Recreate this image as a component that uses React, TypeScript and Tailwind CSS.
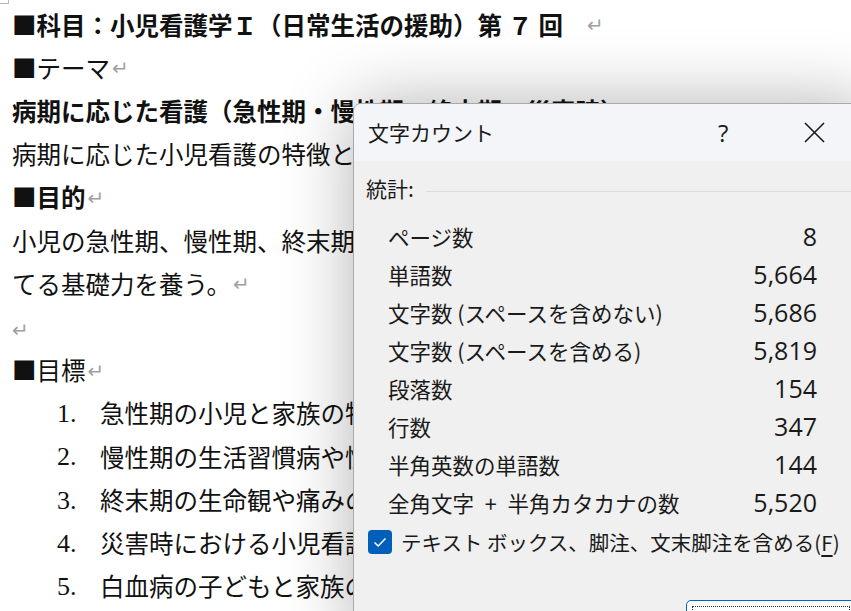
import React from "react";

const docFont = "font-['Noto_Sans_CJK_JP',serif]";
const serifNum = "font-['Liberation_Serif',serif]";
const uiFont = "font-['Noto_Sans_CJK_JP',sans-serif]";
const numFont = "font-['Open_Sans','Noto_Sans',sans-serif]";

function Ret() {
  return <span className="text-[#a0a0a0] text-[20px] font-normal ml-[2px] font-['DejaVu_Sans',sans-serif]">↵</span>;
}

const stats: { label: string; value: string }[] = [
  { label: "ページ数", value: "8" },
  { label: "単語数", value: "5,664" },
  { label: "文字数 (スペースを含めない)", value: "5,686" },
  { label: "文字数 (スペースを含める)", value: "5,819" },
  { label: "段落数", value: "154" },
  { label: "行数", value: "347" },
  { label: "半角英数の単語数", value: "144" },
  { label: "全角文字\u2002+\u2002半角カタカナの数", value: "5,520" },
];

const goals = [
  "急性期の小児と家族の特徴を理解し、必要な看護を説明できる。",
  "慢性期の生活習慣病や慢性疾患をもつ小児と家族の看護を説明できる。",
  "終末期の生命観や痛みの緩和、家族への援助について説明できる。",
  "災害時における小児看護の役割を説明できる。",
  "白血病の子どもと家族の看護について説明できる。",
];

function Line({ children, className = "" }: { children: React.ReactNode; className?: string }) {
  return <div className={`h-[43.2px] flex items-center whitespace-nowrap ${className}`}>{children}</div>;
}

function WordCountDialog() {
  return (
    <div className={`absolute left-[353px] top-[103px] w-[520px] h-[540px] rounded-tl-[8px] border border-[#a9a9a9] bg-[#f0f0f0] shadow-[0_0_70px_rgba(0,0,0,0.3)] overflow-hidden text-[#1a1a1a] ${uiFont}`}>
      <div className="h-[57px] bg-[#f3f5f8] flex items-center pl-[14px] relative">
        <span className="text-[21px]">文字カウント</span>
        <span className={`absolute left-[364px] top-[11px] text-[24px] ${numFont}`}>?</span>
        <svg className="absolute left-[450px] top-[18px]" width="21" height="21" viewBox="0 0 21 21">
          <path d="M1 1 L20 20 M20 1 L1 20" stroke="#1a1a1a" strokeWidth="1.6" fill="none" />
        </svg>
      </div>
      <div className="flex items-center pt-[13px] pl-[12px]">
        <span className="text-[21px] leading-[28px]">統計:</span>
        <div className="flex-1 h-px bg-[#dcdcdc] ml-[12px] mt-[6px]" />
      </div>
      <div className="mt-[16px] pl-[34px] w-[463px]">
        {stats.map((s) => (
          <div key={s.label} className="h-[38px] flex items-center justify-between">
            <span className="text-[21.5px] whitespace-pre">{s.label}</span>
            <span className={`text-[25px] ${numFont}`}>{s.value}</span>
          </div>
        ))}
      </div>
      <div className="h-[40px] flex items-center pl-[14px]">
        <div className="w-[24px] h-[24px] rounded-[4px] bg-[#005fb8] flex items-center justify-center">
          <svg width="14" height="11" viewBox="0 0 14 11">
            <path d="M1.5 5.5 L5.2 9 L12.5 1.5" stroke="white" strokeWidth="1.5" fill="none" />
          </svg>
        </div>
        <span className="ml-[9px] text-[20.5px]">
          テキスト ボックス、脚注、文末脚注を含める(<span className="underline underline-offset-4">F</span>)
        </span>
      </div>
      <div className="mt-[38px] ml-[332px] w-[170px] h-[40px] rounded-[5px] border border-[#0067c0] bg-[#fdfdfd] p-[5px]">
        <div className="w-full h-full border border-dotted border-[#333]" />
      </div>
    </div>
  );
}

export default function App() {
  return (
    <div className="relative w-[851px] h-[611px] bg-white overflow-hidden">
      <div className="absolute left-0 top-0 w-[9px] h-[4px] border-r border-b border-[#b8b8b8]" />
      <div className={`pt-[3.5px] pl-[12px] text-[24.5px] text-[#111] ${docFont}`}>
        <Line className="font-bold">
          ■科目：小児看護学Ｉ（日常生活の援助）第<span className="mx-[6px]">７</span>回<span className="ml-[22px]" /><Ret />
        </Line>
        <Line>
          ■テーマ<Ret />
        </Line>
        <Line className="font-bold">病期に応じた看護（急性期・慢性期・終末期・災害時）</Line>
        <Line>病期に応じた小児看護の特徴と援助について学ぶ。</Line>
        <Line className="font-bold">
          ■目的<Ret />
        </Line>
        <Line>小児の急性期、慢性期、終末期、災害時における子どもと家族の特徴を理解し、看護を考え</Line>
        <Line>
          てる基礎力を養う。<Ret />
        </Line>
        <Line>
          <span className="-ml-[2px]"><Ret /></span>
        </Line>
        <Line>
          ■目標<Ret />
        </Line>
        {goals.map((g, i) => (
          <Line key={i}>
            <span className={`ml-[45px] w-[43px] shrink-0 text-[26px] ${serifNum}`}>{i + 1}.</span>
            <span>{g}</span>
          </Line>
        ))}
      </div>
      <WordCountDialog />
    </div>
  );
}
